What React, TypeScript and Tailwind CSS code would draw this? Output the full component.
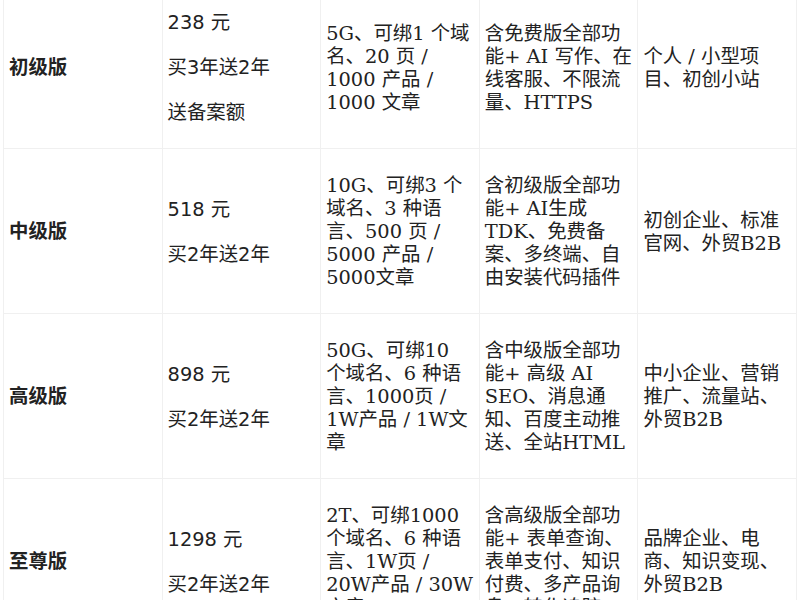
import React from "react";

type Plan = {
  name: string;
  price: string[];
  quota: string;
  features: string;
  fit: string;
};

const plans: Plan[] = [
  {
    name: "初级版",
    price: ["238 元", "买3年送2年", "送备案额"],
    quota: "5G、可绑1 个域名、20 页 / 1000 产品 / 1000 文章",
    features: "含免费版全部功能+ AI 写作、在线客服、不限流量、HTTPS",
    fit: "个人 / 小型项目、初创小站",
  },
  {
    name: "中级版",
    price: ["518 元", "买2年送2年"],
    quota: "10G、可绑3 个域名、3 种语言、500 页 / 5000 产品 / 5000文章",
    features: "含初级版全部功能+ AI生成TDK、免费备案、多终端、自由安装代码插件",
    fit: "初创企业、标准官网、外贸B2B",
  },
  {
    name: "高级版",
    price: ["898 元", "买2年送2年"],
    quota: "50G、可绑10 个域名、6 种语言、1000页 / 1W产品 / 1W文章",
    features: "含中级版全部功能+ 高级 AI SEO、消息通知、百度主动推送、全站HTML",
    fit: "中小企业、营销推广、流量站、外贸B2B",
  },
  {
    name: "至尊版",
    price: ["1298 元", "买2年送2年"],
    quota: "2T、可绑1000 个域名、6 种语言、1W页 / 20W产品 / 30W文章",
    features: "含高级版全部功能+ 表单查询、表单支付、知识付费、多产品询盘、转化追踪",
    fit: "品牌企业、电商、知识变现、外贸B2B",
  },
];

const cell =
  "border border-[#f0f0f0] px-[5px] pt-[25px] pb-[24px] align-middle text-left leading-[23px]";
const sans = "font-['DejaVu_Sans','Noto_Sans_CJK_SC',sans-serif]";
const serif = "font-['DejaVu_Serif','Noto_Sans_CJK_SC',serif]";

export default function App() {
  return (
    <div className="w-[800px] h-[600px] overflow-hidden bg-white">
      <table className="w-[794px] mx-[3px] -mt-[15px] table-fixed border-collapse text-[19.4px] text-[#222]">
        <tbody>
          {plans.map((p) => (
            <tr key={p.name}>
              <th className={`${cell} ${sans} font-bold`}>{p.name}</th>
              <td className={`${cell} ${sans}`}>
                <div className="flex flex-col gap-[22px]">
                  {p.price.map((line) => (
                    <p key={line}>{line}</p>
                  ))}
                </div>
              </td>
              <td className={`${cell} ${serif}`}>{p.quota}</td>
              <td className={`${cell} ${serif}`}>{p.features}</td>
              <td className={`${cell} ${serif}`}>{p.fit}</td>
            </tr>
          ))}
        </tbody>
      </table>
    </div>
  );
}
